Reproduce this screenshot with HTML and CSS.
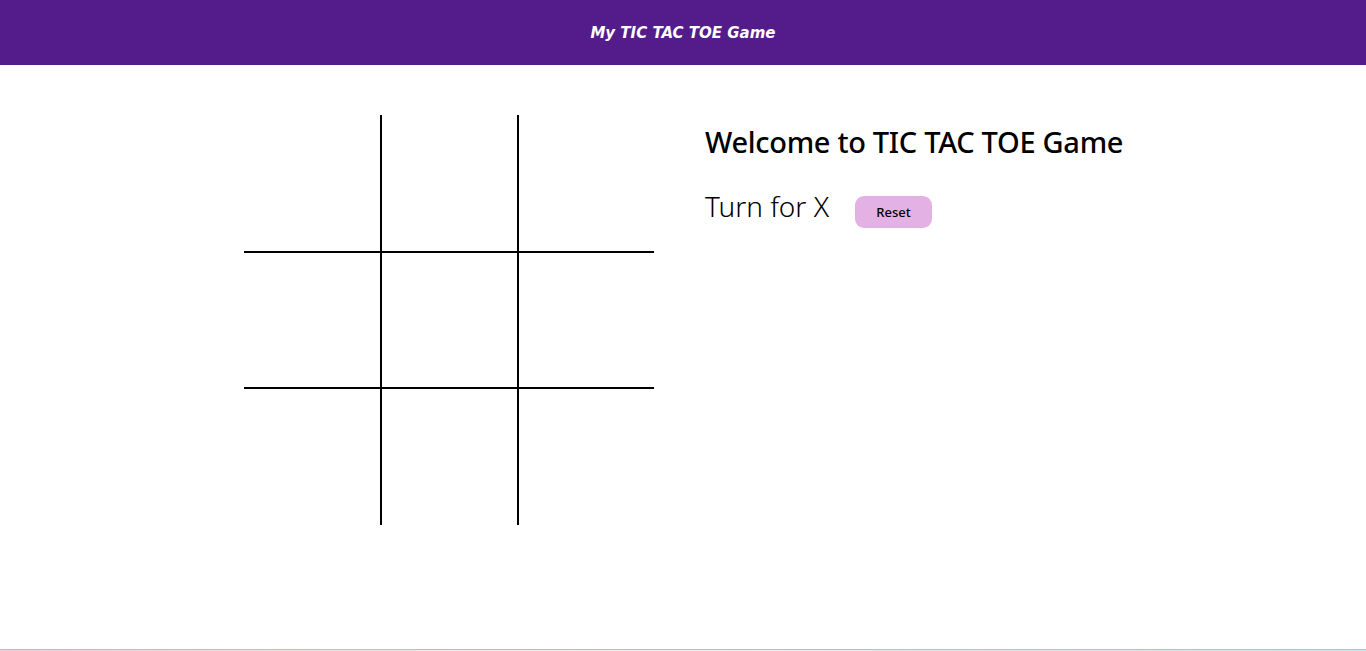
FILE: index.html
```html
<!DOCTYPE html>
<html lang="en">
<head>
<meta charset="utf-8">
<title>Tic Tac Toe</title>
<link rel="stylesheet" href="styles.css">
</head>
<body>
<nav class="navbar">
  <span class="brand">My TIC TAC TOE Game</span>
</nav>
<main class="gamecontainer">
  <div class="board">
    <div class="box"></div>
    <div class="box bl"></div>
    <div class="box bl"></div>
    <div class="box bt"></div>
    <div class="box bt bl"></div>
    <div class="box bt bl"></div>
    <div class="box bt"></div>
    <div class="box bt bl"></div>
    <div class="box bt bl"></div>
  </div>
  <div class="gameinfo">
    <h1 class="title">Welcome to TIC TAC TOE Game</h1>
    <div class="turnrow">
      <span class="info">Turn for X</span>
      <button class="reset">Reset</button>
    </div>
  </div>
</main>
<div class="edge"></div>
</body>
</html>
```
FILE: styles.css
```css
html, body {
  margin: 0;
  padding: 0;
  height: 100%;
  background: #ffffff;
}
body {
  font-family: "Open Sans", "Liberation Sans", sans-serif;
  overflow: hidden;
}
.navbar {
  height: 65px;
  background: #541c8b;
  display: flex;
  align-items: center;
  justify-content: center;
}
.brand {
  color: #ffffff;
  font-family: "DejaVu Sans", sans-serif;
  font-style: italic;
  font-weight: 700;
  font-size: 15px;
  letter-spacing: 0px;
  line-height: 20px;
}
.gamecontainer {
  display: flex;
  padding-top: 50px;
  padding-left: 244px;
}
.board {
  display: grid;
  grid-template-columns: 136px 137px 137px;
  grid-template-rows: 136px 136px 138px;
}
.box {
  box-sizing: border-box;
}
.bl { border-left: 2px solid #000; }
.bt { border-top: 2px solid #000; }
.gameinfo {
  padding-left: 51px;
  padding-top: 7px;
}
.title {
  margin: 0;
  font-family: "Noto Sans", sans-serif;
  font-weight: 500;
  font-size: 29px;
  letter-spacing: -0.3px;
  line-height: 40px;
  color: #000;
}
.turnrow {
  display: flex;
  align-items: flex-start;
  margin-top: 27px;
}
.info {
  font-family: "Noto Sans", sans-serif;
  font-weight: 300;
  font-size: 28px;
  line-height: 34px;
  color: #000;
}
.reset {
  margin-left: 26px;
  width: 77px;
  height: 32px;
  margin-top: 7px;
  border: none;
  border-radius: 9px;
  background: #e4b1e4;
  font-family: "Noto Sans", sans-serif;
  font-size: 13px;
  font-weight: 500;
  color: #000;
  padding: 0;
}
.edge {
  position: fixed;
  left: 0;
  right: 0;
  bottom: 0;
  height: 1px;
  border-top: 1px solid #bdbdbd;
  background: linear-gradient(to right, #f7c9dc 0%, #f3e3e3 20%, #ededed 50%, #dde8ea 80%, #bdeff4 100%);
}
```
